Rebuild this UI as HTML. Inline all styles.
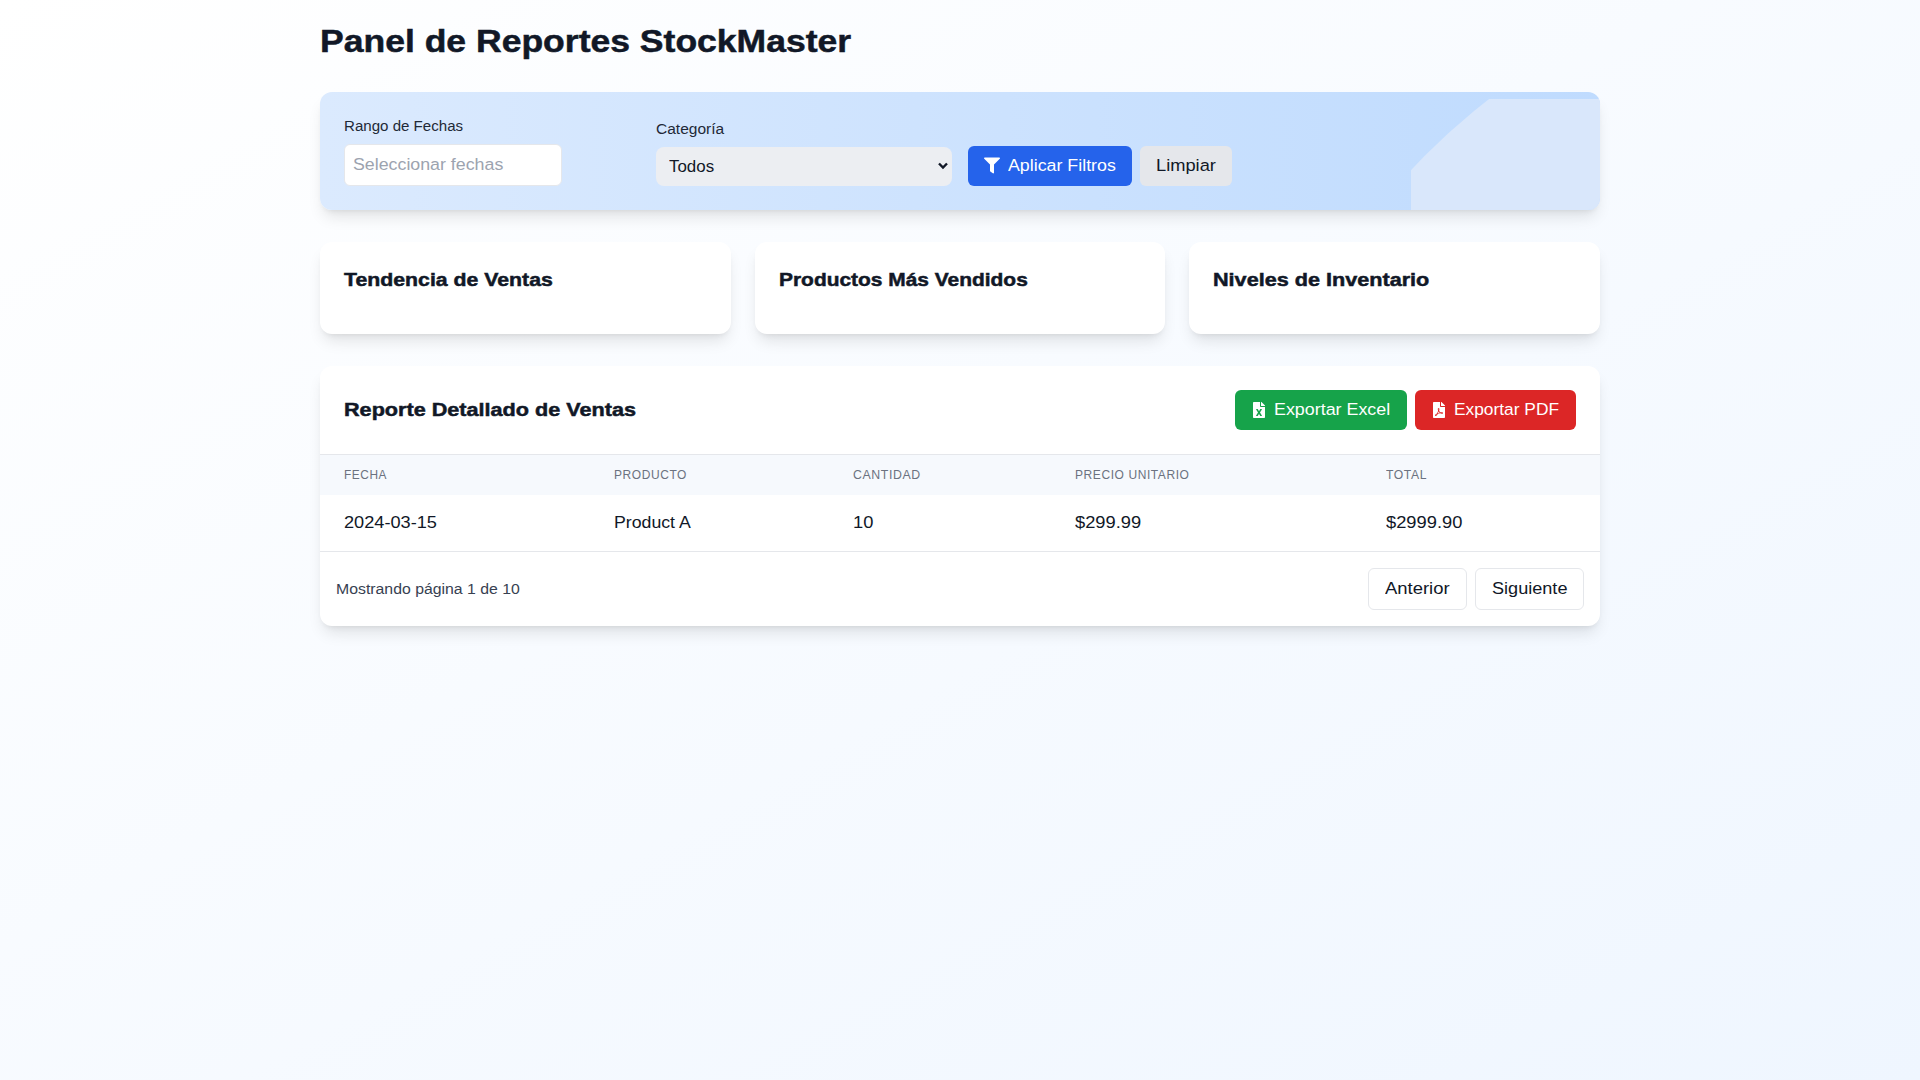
<!DOCTYPE html>
<html lang="es"><head>
<meta charset="utf-8">
<title>Panel de Reportes StockMaster</title>
<style>
*{box-sizing:border-box;margin:0;padding:0;}
html,body{width:1920px;height:1080px;overflow:hidden;}
body{
  font-family:"Liberation Sans",sans-serif;
  background:linear-gradient(to bottom right,#ffffff,#eff6ff);
  color:#111827;
}
.wrap{width:1280px;margin:0 auto;padding-top:24px;position:relative;}
h1{font-size:30px;line-height:36px;font-weight:700;color:#111827;margin-bottom:32px;}
.filters{position:relative;height:118px;border-radius:12px;background:linear-gradient(to right,#dbeafe,#bfdbfe);
  box-shadow:0 10px 15px -3px rgba(0,0,0,.1),0 4px 6px -4px rgba(0,0,0,.1);margin-bottom:32px;overflow:hidden;}
.deco{position:absolute;left:1091px;top:7px;width:189px;height:111px;background:#d9e7fb;
  clip-path:circle(682px at 496px 539px);}
.lbl{position:absolute;font-size:14px;line-height:20px;font-weight:500;color:#1f2937;}
.inp{position:absolute;left:24px;top:52px;width:218px;height:42px;background:#fff;border:1px solid #e5e7eb;border-radius:6px;
  font-size:16px;line-height:24px;padding:8px 8px;color:#9ca3af;}
.sel{position:absolute;left:336px;top:55px;width:296px;height:39px;background:#eceef2;border-radius:8px;font-size:16px;line-height:24px;color:#111827;}
.sel > span{position:absolute;left:13px;top:8px;}
.sel svg{position:absolute;right:4px;top:15px;}
.btn{position:absolute;height:40px;border-radius:6px;font-size:16px;line-height:24px;padding:8px 16px;white-space:nowrap;}
.apl{left:648px;top:54px;width:164px;background:#2563eb;color:#fff;}
.lim{left:820px;top:54px;width:92px;background:#e5e7eb;color:#111827;}
.btn svg{position:absolute;}
.cards{position:relative;height:92px;margin-bottom:32px;}
.card{position:absolute;top:0;height:92px;width:410.67px;background:#fff;border-radius:12px;
  box-shadow:0 10px 15px -3px rgba(0,0,0,.1),0 4px 6px -4px rgba(0,0,0,.1);}
.card h3,.rep h2{position:absolute;left:24px;top:24px;font-size:18px;line-height:28px;font-weight:700;color:#111827;white-space:nowrap;}
.rep{position:relative;height:260px;background:#fff;border-radius:12px;overflow:hidden;
  box-shadow:0 10px 15px -3px rgba(0,0,0,.1),0 4px 6px -4px rgba(0,0,0,.1);}
.rep h2{top:30px;}
.exp{top:24px;color:#fff;}
.xls{left:915px;width:172px;background:#16a34a;}
.pdf{left:1095px;width:161px;background:#dc2626;}
.line{position:absolute;left:0;width:1280px;height:1px;background:#e5e7eb;}
.thead{position:absolute;left:0;top:89px;width:1280px;height:40px;background:#f6f9fd;}
.th{position:absolute;top:12px;font-size:12px;line-height:16px;color:#6b7280;letter-spacing:.6px;text-transform:uppercase;white-space:nowrap;}
.td{position:absolute;top:145px;font-size:16px;line-height:24px;color:#111827;white-space:nowrap;}
.foot{position:absolute;left:16px;top:213px;font-size:14px;line-height:20px;color:#374151;white-space:nowrap;}
.pg{top:202px;height:42px;border:1px solid #e5e7eb;background:#fff;color:#111827;border-radius:6px;}
.ant{left:1048px;width:99px;}
.sig{left:1155px;width:109px;}
.tx{display:inline-block;vertical-align:top;transform-origin:0 50%;}
h1 .tx,h2 .tx,h3 .tx{-webkit-text-stroke:0.5px currentColor;}
</style>
</head>
<body style="font-family: &quot;Liberation Sans&quot;, sans-serif;">
<div class="wrap">
  <h1><span class="tx" style="font-size: 31.5px; position: relative; top: -1px; transform: scaleX(1.1279);">Panel de Reportes StockMaster</span></h1>
  <div class="filters">
    <div class="deco"></div>
    <div class="lbl" style="left:24px;top:24px;"><span class="tx" style="font-size: 14.7px; transform: scaleX(1.027);">Rango de Fechas</span></div>
    <div class="inp"><span class="tx" style="font-size: 16.8px; transform: scaleX(1.0598);">Seleccionar fechas</span></div>
    <div class="lbl" style="left:336px;top:27px;"><span class="tx" style="font-size: 14.7px; transform: scaleX(1.0562);">Categoría</span></div>
    <div class="sel"><span><span class="tx" style="font-size: 16.8px; transform: scaleX(1.0077);">Todos</span></span>
      <svg width="10" height="8" viewBox="0 0 10 8"><path d="M1 1.5 L5 5.5 L9 1.5" fill="none" stroke="#111827" stroke-width="2.4"></path></svg>
    </div>
    <div class="btn apl">
      <svg style="left:16px;top:11px" width="16" height="17" viewBox="0 0 512 512"><path fill="#fff" d="M487.976 0H24.028C2.71 0-8.047 25.866 7.058 40.971L192 225.941V432c0 7.831 3.821 15.17 10.237 19.662l80 55.98C298.02 518.69 320 507.493 320 487.98V225.941l184.947-184.97C520.021 25.896 509.338 0 487.976 0z"></path></svg>
      <span style="position:absolute;left:40px;top:8px;"><span class="tx" style="font-size: 16.8px; transform: scaleX(1.0607);">Aplicar Filtros</span></span>
    </div>
    <div class="btn lim"><span class="tx" style="font-size: 16.8px; transform: scaleX(1.0892);">Limpiar</span></div>
  </div>
  <div class="cards">
    <div class="card" style="left:0"><h3><span class="tx" style="font-size: 18.9px; transform: scaleX(1.1261);">Tendencia de Ventas</span></h3></div>
    <div class="card" style="left:434.67px"><h3><span class="tx" style="font-size: 18.9px; transform: scaleX(1.1075);">Productos Más Vendidos</span></h3></div>
    <div class="card" style="left:869.33px"><h3><span class="tx" style="font-size: 18.9px; transform: scaleX(1.1447);">Niveles de Inventario</span></h3></div>
  </div>
  <div class="rep">
    <h2><span class="tx" style="font-size: 18.9px; transform: scaleX(1.1445);">Reporte Detallado de Ventas</span></h2>
    <div class="btn exp xls">
      <svg style="left:18px;top:12px" width="12" height="16" viewBox="0 0 384 512"><path fill="#fff" d="M224 136V0H24C10.7 0 0 10.7 0 24v464c0 13.3 10.7 24 24 24h336c13.3 0 24-10.7 24-24V160H248c-13.2 0-24-10.8-24-24zm60.1 106.5L224 336l60.1 93.5c5.1 8-.6 18.5-10.1 18.5h-34.9c-4.4 0-8.5-2.4-10.6-6.3C208.9 405.5 192 373 192 373c-6.4 14.8-10 20-36.6 68.8-2.1 3.9-6.1 6.3-10.5 6.3H110c-9.5 0-15.2-10.5-10.1-18.5l60.3-93.5-60.3-93.5c-5.2-8 .6-18.5 10.1-18.5h34.8c4.4 0 8.5 2.4 10.6 6.3 26.1 48.8 20 33.6 36.6 68.5 0 0 6.1-11.7 36.6-68.5 2.1-3.9 6.2-6.3 10.6-6.3H274c9.5-.1 15.2 10.4 10.1 18.4zM384 121.9v6.1H256V0h6.1c6.4 0 12.5 2.5 17 7l97.9 98c4.5 4.5 7 10.6 7 16.9z"></path></svg>
      <span style="position:absolute;left:39px;top:8px;"><span class="tx" style="font-size: 16.8px; transform: scaleX(1.0651);">Exportar Excel</span></span>
    </div>
    <div class="btn exp pdf">
      <svg style="left:18px;top:12px" width="12" height="16" viewBox="0 0 384 512"><path fill="#fff" d="M181.9 256.1c-5-16-4.9-46.9-2-46.9 8.4 0 7.6 36.9 2 46.9zm-1.7 47.2c-7.7 20.2-17.3 43.3-28.4 62.7 18.3-7 39-17.2 62.9-21.900-12.7-9.6-24.9-23.4-34.5-40.8zM86.1 428.1c0 .8 13.2-5.4 34.9-40.2-6.7 6.3-29.1 24.5-34.9 40.2zM248 160h136v328c0 13.3-10.7 24-24 24H24c-13.3 0-24-10.7-24-24V24C0 10.7 10.7 0 24 0h200v136c0 13.2 10.8 24 24 24zm-8 171.8c-20-12.2-33.3-29-42.700-53.8 4.5-18.5 11.6-46.6 6.2-64.2-4.7-29.4-42.4-26.5-47.8-6.8-5 18.3-.4 44.1 8.1 77-11.6 27.6-28.7 64.6-40.8 85.8-.1 0-.1.1-.2.1-27.1 13.9-73.6 44.5-54.5 68 5.6 6.9 16 10 21.5 10 17.9 0 35.7-18 61.1-61.8 25.8-8.5 54.1-19.1 79-23.2 21.7 11.8 47.1 19.5 64 19.5 29.2 0 31.2-32 19.7-43.4-13.9-13.6-54.3-9.7-73.6-7.2zM377 105L279 7c-4.5-4.5-10.6-7-17-7h-6v128h128v-6.1c0-6.3-2.5-12.4-7-16.900zm-74.1 255.3c4.1-2.7-2.5-11.9-42.8-9 37.1 15.8 42.8 9 42.8 9z"></path></svg>
      <span style="position:absolute;left:39px;top:8px;"><span class="tx" style="font-size: 16.8px; transform: scaleX(1.033);">Exportar PDF</span></span>
    </div>
    <div class="line" style="top:88px"></div>
    <div class="thead">
      <div class="th" style="left:24px"><span class="tx" style="font-size: 12.6px; transform: scaleX(0.9436);">Fecha</span></div>
      <div class="th" style="left:294px"><span class="tx" style="font-size: 12.6px; transform: scaleX(0.9525);">Producto</span></div>
      <div class="th" style="left:533px"><span class="tx" style="font-size: 12.6px; transform: scaleX(0.979);">Cantidad</span></div>
      <div class="th" style="left:754.5px"><span class="tx" style="font-size: 12.6px; transform: scaleX(0.9544);">Precio Unitario</span></div>
      <div class="th" style="left:1066px"><span class="tx" style="font-size: 12.6px; transform: scaleX(0.968);">Total</span></div>
    </div>
    <div class="td" style="left:24px"><span class="tx" style="font-size: 16.8px; transform: scaleX(1.0832);">2024-03-15</span></div>
    <div class="td" style="left:294px"><span class="tx" style="font-size: 16.8px; transform: scaleX(1.0552);">Product A</span></div>
    <div class="td" style="left:533px"><span class="tx" style="font-size: 16.8px; transform: scaleX(1.0904);">10</span></div>
    <div class="td" style="left:754.5px"><span class="tx" style="font-size: 16.8px; transform: scaleX(1.0907);">$299.99</span></div>
    <div class="td" style="left:1066px"><span class="tx" style="font-size: 16.8px; transform: scaleX(1.0906);">$2999.90</span></div>
    <div class="line" style="top:185px"></div>
    <div class="foot"><span class="tx" style="font-size: 14.7px; transform: scaleX(1.077);">Mostrando página 1 de 10</span></div>
    <div class="btn pg ant" style="padding:8px 16px;"><span class="tx" style="font-size: 16.8px; transform: scaleX(1.0992);">Anterior</span></div>
    <div class="btn pg sig" style="padding:8px 16px;"><span class="tx" style="font-size: 16.8px; transform: scaleX(1.0781);">Siguiente</span></div>
  </div>
</div>


</body></html>
